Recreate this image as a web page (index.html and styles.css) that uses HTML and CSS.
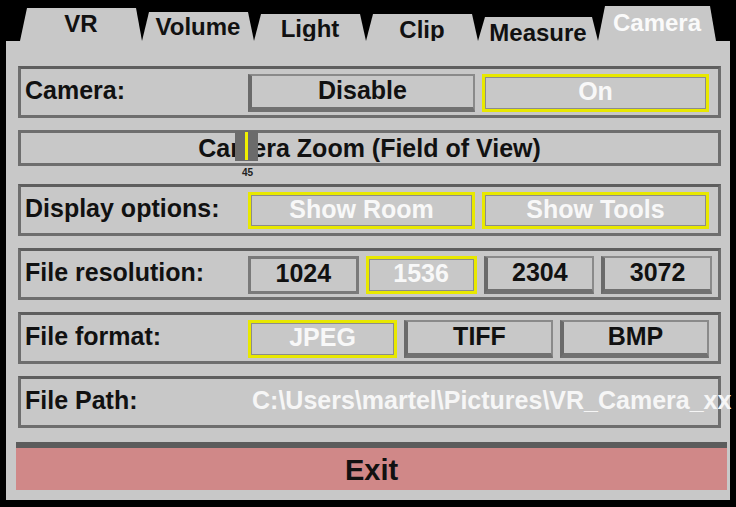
FILE: index.html
```html
<!DOCTYPE html>
<html>
    <head>
        <title>VR Camera</title>
        <link rel="stylesheet" href="styles.css">
    </head>
    <body>
        <div class="tabs">
            <div class="tab tab-vr">VR</div>
            <div class="tab tab-volume">Volume</div>
            <div class="tab tab-light">Light</div>
            <div class="tab tab-clip">Clip</div>
            <div class="tab tab-measure">Measure</div>
            <div class="tab tab-camera active">Camera</div>
        </div>
        <div class="panel">
            <div class="row">
                <div class="label">Camera:</div>
                <div class="buttons cols-2">
                    <div class="btn btn-raised">Disable</div>
                    <div class="btn selected">On</div>
                </div>
            </div>

            <div class="slider">
                <div class="slider-title">Camera Zoom (Field of View)</div>
                <div class="handle"><span class="handle-mark"></span></div>
                <div class="slider-value">45</div>
            </div>

            <div class="row">
                <div class="label">Display options:</div>
                <div class="buttons cols-2">
                    <div class="btn selected">Show Room</div>
                    <div class="btn selected">Show Tools</div>
                </div>
            </div>

            <div class="row">
                <div class="label">File resolution:</div>
                <div class="buttons cols-4">
                    <div class="btn btn-flat">1024</div>
                    <div class="btn selected">1536</div>
                    <div class="btn btn-raised">2304</div>
                    <div class="btn btn-raised">3072</div>
                </div>
            </div>

            <div class="row">
                <div class="label">File format:</div>
                <div class="buttons cols-3">
                    <div class="btn selected">JPEG</div>
                    <div class="btn btn-raised">TIFF</div>
                    <div class="btn btn-raised">BMP</div>
                </div>
            </div>

            <div class="row row-path">
                <div class="label">File Path:</div>
                <div class="path">C:\Users\martel\Pictures\VR_Camera_xx</div>
            </div>

            <div class="exit">Exit</div>
        </div>
    </body>
</html>
```

FILE: styles.css
```css
html {
    height:100%;
}

body {
    margin:0;
    padding:0;
    width:736px;
    height:507px;
    overflow:hidden;
    background:#000;
    font-family:"Liberation Sans", Arial, sans-serif;
    font-weight:bold;
    color:#111;
}

/* tabs */

.tabs {
    display:flex;
    align-items:flex-end;
    height:41px;
    padding-left:20px;
}

.tab {
    box-sizing:border-box;
    background:#c8c8c8;
    font-size:24px;
    text-align:center;
    clip-path:polygon(7px 0, calc(100% - 6px) 0, 100% 100%, 0 100%);
}

.tab-vr {
    width:122px;
    height:33px;
    line-height:31px;
}

.tab-volume {
    width:112px;
    height:29px;
    line-height:30px;
}

.tab-light,
.tab-clip {
    width:112px;
    height:27px;
    line-height:30px;
}

.tab-clip {
    line-height:32px;
}

.tab-measure {
    width:120px;
    height:24px;
    line-height:32px;
}

.tab-camera {
    width:118px;
    height:35px;
    line-height:33px;
}

.tab.active {
    color:#fafafa;
}

/* panel */

.panel {
    box-sizing:border-box;
    margin-left:6px;
    width:724px;
    height:459px;
    background:#c8c8c8;
    padding:25px 9px 0 12px;
    display:flex;
    flex-direction:column;
    gap:12px;
}

.row {
    box-sizing:border-box;
    height:52px;
    border:3px solid #6e6e6e;
    border-top-color:#5e5e5e;
    display:flex;
    align-items:center;
    padding:0 9px 0 4px;
}

.label {
    flex:0 0 223px;
    font-size:25px;
    padding-bottom:3px;
}

.buttons {
    flex:1;
    display:grid;
    gap:7px;
    height:35px;
    margin-top:-2px;
}

.cols-2 { grid-template-columns:1fr 1fr; }
.cols-3 { grid-template-columns:1fr 1fr 1fr; }
.cols-4 { grid-template-columns:1fr 1fr 1fr 1fr; margin-right:-3px; }

.btn {
    box-sizing:border-box;
    display:flex;
    align-items:center;
    justify-content:center;
    font-size:25px;
    background:#c8c8c8;
    padding-bottom:2px;
}

.btn-raised {
    border-left:4px solid #6a6a6a;
    border-bottom:5px solid #717171;
    border-top:2px solid #8a8a8a;
    border-right:2px solid #8a8a8a;
}

.btn-flat {
    border:3px solid #7a7a7a;
}

.btn.selected {
    border:3px solid #e8e800;
    box-shadow:inset 0 0 0 1px #8c8c8c;
    color:#f8f8f8;
}

/* slider */

.slider {
    box-sizing:border-box;
    position:relative;
    height:36px;
    border:3px solid #6e6e6e;
    margin-bottom:6px;
}

.slider-title {
    font-size:25px;
    line-height:30px;
    text-align:center;
}

.handle {
    position:absolute;
    left:214px;
    top:-2px;
    width:23px;
    height:30px;
    background:#6b6b6b;
}

.handle-mark {
    position:absolute;
    left:10px;
    top:1px;
    width:3px;
    height:28px;
    background:#f0f000;
}

.slider-value {
    position:absolute;
    left:215px;
    top:34px;
    width:23px;
    text-align:center;
    font-size:10px;
    color:#222;
}

/* file path */

.path {
    font-size:25px;
    color:#f6f6f6;
    white-space:nowrap;
    margin-left:4px;
    margin-right:-40px;
    padding-bottom:3px;
}

/* exit */

.exit {
    box-sizing:border-box;
    margin-top:2px;
    margin-left:-2px;
    width:711px;
    height:48px;
    border-top:6px solid #5c5c5c;
    background:#d08888;
    font-size:29px;
    line-height:44px;
    text-align:center;
}
```
